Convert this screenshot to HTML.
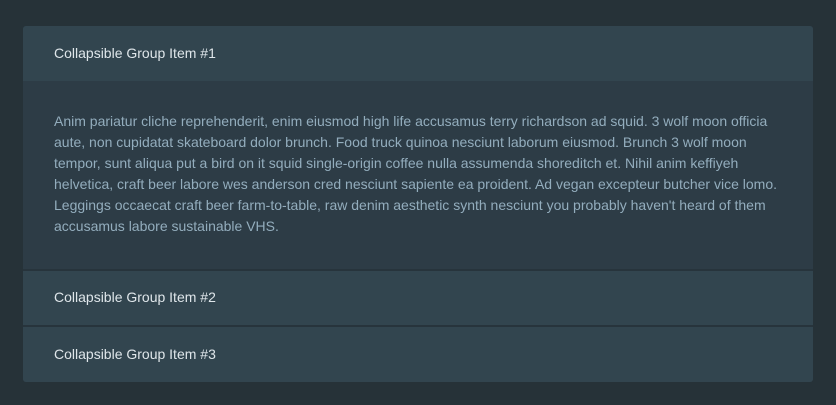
<!DOCTYPE html>
<html><head><style>
body{margin:0;background:#263238;font-family:"Liberation Sans",sans-serif;width:836px;height:405px;overflow:hidden}
.card{position:absolute;left:23px;top:26px;width:790px;border-radius:3px;overflow:hidden;background:#2d3c46}
.h{height:55px;line-height:55px;padding-left:31px;background:#32454f;color:#dfe6ea;font-size:14px}
.b{background:#2d3c46;color:#93adbd;font-size:14px;line-height:21px;padding:30px 31px 32px 31px;height:126px}
.sep{height:2px;background:#27343c}
.h2{height:54px;line-height:52px;padding-bottom:0}
</style></head><body>
<div class="card">
<div class="h">Collapsible Group Item #1</div>
<div class="b">Anim pariatur cliche reprehenderit, enim eiusmod high life accusamus terry richardson ad squid. 3 wolf moon officia aute, non cupidatat skateboard dolor brunch. Food truck quinoa nesciunt laborum eiusmod. Brunch 3 wolf moon tempor, sunt aliqua put a bird on it squid single-origin coffee nulla assumenda shoreditch et. Nihil anim keffiyeh helvetica, craft beer labore wes anderson cred nesciunt sapiente ea proident. Ad vegan excepteur butcher vice lomo. Leggings occaecat craft beer farm-to-table, raw denim aesthetic synth nesciunt you probably haven't heard of them accusamus labore sustainable VHS.</div>
<div class="sep"></div>
<div class="h h2">Collapsible Group Item #2</div>
<div class="sep"></div>
<div class="h" style="height:55px;line-height:55px">Collapsible Group Item #3</div>
</div>
</body></html>
